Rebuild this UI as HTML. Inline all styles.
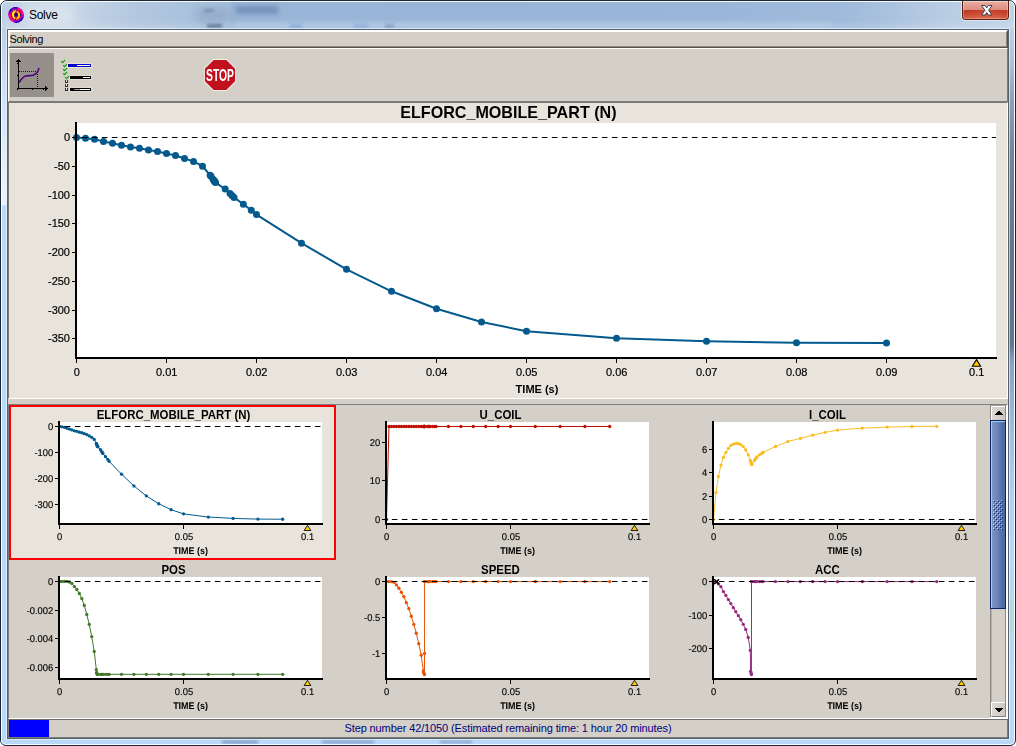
<!DOCTYPE html>
<html lang="en">
<head>
<meta charset="utf-8">
<title>Solve</title>
<style>
html,body{margin:0;padding:0;}
body{width:1016px;height:746px;background:#fff;overflow:hidden;position:relative;
  font-family:"Liberation Sans",Arial,sans-serif;color:#000;}
div{position:absolute;box-sizing:border-box;}
svg{position:absolute;left:0;top:0;overflow:visible;will-change:transform;}
svg text{font-family:"Liberation Sans",Arial,sans-serif;}
#win{left:0;top:0;width:1016px;height:746px;border:1px solid #1b2733;border-radius:7px 7px 6px 6px;overflow:hidden;
  background:#b9d9fb;}
#win:after{content:"";position:absolute;left:0;top:0;right:0;bottom:0;border:1px solid rgba(255,255,255,.9);border-radius:6px 6px 5px 5px;}
#gl-top{left:0;top:0;width:1014px;height:30px;
  background:linear-gradient(to right,#bccfe3 0,#cad8e8 30px,#cbd9e8 70px,#bdcfe3 100px,#b2c7df 140px,#aac2dd 190px,#a4bedb 229px,#99b6d8 232px,#98b5d8 480px,#9ab6d9 720px,#a0bbdb 850px,#b3c8e1 920px,#bccfe5 965px,#c0d2e6 1014px);}
#gl-top2{left:0;top:20px;width:1014px;height:10px;background:linear-gradient(to bottom,rgba(255,255,255,0),rgba(255,255,255,.18));}
#gl-left{left:0;top:28px;width:7px;height:716px;background:linear-gradient(to bottom,#bdd0e6 0,#c2d5ea 17px,#cfe3fa 72px,#e0eefc 130px,#e8f2fc 162px,#e8f2fc 177px,#b9d9fb 178px,#b9d9fb 100%);}
#gl-right{left:1007px;top:28px;width:7px;height:716px;background:linear-gradient(to bottom,#bfd1e5 0,#b0c2d8 32px,#8ea2ba 72px,#72869e 122px,#62768e 222px,#62788f 317px,#86a2c4 334px,#9cbadc 392px,#b0d0f4 472px,#b9d9fb 532px,#b6d9ec 562px,#b4d8dc 592px,#b8d9f4 622px,#b9d9fb 652px,#b9d9fb 100%);}
#inner{left:7px;top:29px;width:1002px;height:710px;border:1px solid #56636f;background:#d4d0c8;box-shadow:0 0 0 1px rgba(240,248,255,.6);}
/* content coordinates: children of #c are in page coordinates */
#c{left:-1px;top:-1px;width:1016px;height:746px;}
#menubar{left:8px;top:30px;width:1000px;height:18px;background:#d4d0c8;border-top:1px solid #fff;border-left:1px solid #fff;border-right:1px solid #55524d;border-bottom:1px solid #55524d;}
#menubar:after{content:"";position:absolute;left:0;top:0;right:0;bottom:0;border-top:1px solid #fff;border-left:1px solid #fff;border-right:1px solid #8d8a84;border-bottom:1px solid #8d8a84;}
#menutxt{left:9.5px;top:32px;font-size:11px;line-height:14px;letter-spacing:-0.35px;white-space:nowrap;}
#toolbar{left:8px;top:48px;width:1000px;height:54px;background:#d4d0c8;border-top:1px solid #fff;border-left:1px solid #fff;border-bottom:1px solid #7c7a76;border-right:1px solid #7c7a76;}
#btnsel{left:10px;top:53px;width:44px;height:44px;background:#959089;}
#upper{left:8px;top:102px;width:1000px;height:297px;background:#e8e4dc;border-top:1px solid #7c7a76;border-left:1px solid #7c7a76;border-right:1px solid #fff;border-bottom:1px solid #fff;}
#lower{left:8px;top:404px;width:1000px;height:315px;background:#d4d0c8;border-top:1px solid #7c8080;border-left:1px solid #7c8080;border-right:1px solid #fff;border-bottom:1px solid #fff;}
#sel{left:9px;top:405px;width:327px;height:155px;background:#e8e4dc;border:2px solid #ff0000;}
#sbwhite{left:990px;top:717px;width:18px;height:1px;background:#fff;}
#sbwhite2{left:1006px;top:405px;width:2px;height:314px;background:#fff;}
#track{left:990px;top:405px;width:16px;height:312px;background:#d4d0c8;border-left:1px solid #8a8986;border-right:1px solid #8a8986;}
#track:after{content:"";position:absolute;left:0;top:0;width:1px;height:100%;background:#b4b1aa;}
#sup{left:991px;top:405px;width:14px;height:15px;background:linear-gradient(to right,#dedad3,#cbc7bf);border-top:1px solid #a4a29c;}
#sup:after{content:"";position:absolute;left:0;top:0;right:0;bottom:0;border-top:1px solid #fff;border-left:1px solid #fff;}
#sdn{left:991px;top:702px;width:14px;height:15px;background:linear-gradient(to right,#dedad3,#cbc7bf);border-top:1px solid #fff;border-left:1px solid #fff;border-bottom:1px solid #807d78;}
#thumb{left:990px;top:420px;width:16px;height:189px;border:1px solid #0a246a;background:linear-gradient(to right,#8199c9 0,#6d87bb 40%,#5272ab 75%,#4a6aa4 100%);}
#thumb:after{content:"";position:absolute;left:0;top:0;right:0;bottom:0;border-top:1px solid #a6caf0;border-left:1px solid #a6caf0;}
#status{left:8px;top:719px;width:1000px;height:19px;background:#d4d0c8;border:1px solid #7f7d78;border-top-color:#6d6c69;}
#prog{left:9px;top:720px;width:40px;height:17px;background:#0000ff;}
#stattxt{left:9px;top:720px;width:998px;height:17px;text-align:center;font-size:11px;line-height:17px;color:#000080;white-space:nowrap;letter-spacing:-0.115px;}
#title{left:29px;top:7px;font-size:12px;line-height:16px;white-space:nowrap;letter-spacing:-0.3px;color:#000;}
#closeglow{left:961px;top:1px;width:49px;height:20px;border-radius:0 0 5px 5px;background:rgba(255,255,255,.5);}
#close{left:962px;top:1px;width:47px;height:19px;border:1px solid #5d1c12;border-top:none;border-radius:0 0 4px 4px;
  background:radial-gradient(ellipse 26px 12px at 50% 100%,rgba(232,120,80,.55),rgba(232,120,80,0)),linear-gradient(to bottom,#f6d2c8 0,#f6d2c8 1px,#e9aa9e 1px,#dc8c7e 9px,#bf3826 9px,#c4412c 13px,#cf5f48 18px);}
#close:after{content:"";position:absolute;left:0;top:1px;right:0;bottom:0;border:1px solid rgba(255,255,255,.28);border-top:none;border-radius:0 0 3px 3px;}
</style>
</head>
<body>
<div id="win">
 <div id="c">
  <div id="gl-top"></div><div id="gl-top2"></div>
  <div id="gl-left"></div><div id="gl-right"></div>
  <div id="blur1" style="left:196px;top:8px;width:34px;height:14px;background:rgba(80,105,140,.2);filter:blur(4px);"></div>
  <div style="left:207px;top:24px;width:15px;height:4px;background:rgba(40,60,90,.5);filter:blur(1.5px);"></div>
  <div style="left:204px;top:9px;width:10px;height:3px;background:rgba(60,80,110,.35);filter:blur(1.5px);"></div>
  <div style="left:290px;top:24px;width:12px;height:4px;background:rgba(60,110,200,.4);filter:blur(1.5px);"></div>
  <div style="left:354px;top:24px;width:14px;height:4px;background:rgba(70,110,190,.35);filter:blur(1.5px);"></div>
  <div style="left:385px;top:24px;width:9px;height:4px;background:rgba(50,60,140,.4);filter:blur(1.5px);"></div>
  <div id="blur2" style="left:236px;top:6px;width:42px;height:8px;background:rgba(70,100,150,.45);filter:blur(2.5px);"></div>
  <div style="left:24px;top:5px;width:50px;height:20px;background:rgba(255,255,255,.28);filter:blur(5px);border-radius:10px;"></div>
  <div style="left:222px;top:740px;width:36px;height:4px;background:rgba(70,100,150,.45);filter:blur(1.5px);"></div>
  <div style="left:322px;top:740px;width:52px;height:4px;background:rgba(70,100,150,.4);filter:blur(1.5px);"></div>
  <div style="left:440px;top:740px;width:32px;height:4px;background:rgba(70,100,150,.35);filter:blur(1.5px);"></div>
  <div id="blur3" style="left:232px;top:22px;width:600px;height:6px;background:rgba(200,220,240,.35);filter:blur(2px);"></div>
 </div>
</div>
<div id="inner"></div>
<div id="menubar"></div>
<div id="menutxt">Solving</div>
<div id="toolbar"></div>
<div id="btnsel"></div>
<div id="upper"></div>
<div id="lower"></div>
<div id="sel"></div>
<div id="sbwhite2"></div>
<div id="track"></div>
<div id="sbwhite"></div>
<div id="sup"></div>
<div id="sdn"></div>
<div id="thumb"></div>
<div id="status"></div>
<div id="prog"></div>
<div id="stattxt">Step number 42/1050 (Estimated remaining time: 1 hour 20 minutes)</div>
<div id="title">Solve</div>
<div id="closeglow"></div><div id="close"></div>
<svg width="1016" height="746" viewBox="0 0 1016 746">
<defs><radialGradient id="ig"><stop offset="0" stop-color="#ff2040"/><stop offset="0.6" stop-color="#ff0058"/><stop offset="1" stop-color="#e4109a"/></radialGradient><clipPath id="icl"><circle cx="16.05" cy="14.9" r="8"/></clipPath></defs>
<g clip-path="url(#icl)">
<circle cx="16.05" cy="14.9" r="8" fill="url(#ig)"/>
<path d="M9.05 14.66 A7.00 7.00 0 0 1 18.44 8.32" fill="none" stroke="#a000e0" stroke-width="2.4" opacity=".9"/>
<path d="M23.05 15.14 A7.00 7.00 0 0 1 13.66 21.48" fill="none" stroke="#a000e0" stroke-width="2.4" opacity=".9"/>
<path d="M9.19 12.40 A7.30 7.30 0 0 1 16.81 7.64" fill="none" stroke="#1600cc" stroke-width="2"/>
<path d="M22.91 17.40 A7.30 7.30 0 0 1 15.29 22.16" fill="none" stroke="#1600cc" stroke-width="2"/>
<circle cx="16.05" cy="14.9" r="4.7" fill="#d8204a"/>
<circle cx="16.05" cy="14.9" r="4.6" fill="none" stroke="#2a08a8" stroke-width="1.3" stroke-dasharray="1.3 1.1"/>
<path d="M15.2 10.3 C11.6 10.8 10.6 16 14.3 18.9 C15.3 19.4 16 18.8 15.2 18 C13.6 16.2 13.5 13.4 15.6 11.4 C16.2 10.7 15.9 10.2 15.2 10.3 Z" fill="#fff000"/>
<path d="M16.9 19.5 C20.5 19 21.5 13.8 17.8 10.9 C16.8 10.4 16.1 11 16.9 11.8 C18.5 13.6 18.6 16.4 16.5 18.4 C15.9 19.1 16.2 19.6 16.9 19.5 Z" fill="#ffc800"/>
<circle cx="16.1" cy="14.9" r="1.8" fill="#12007c"/>
</g>
<g shape-rendering="crispEdges" fill="#000">
<rect x="18" y="59" width="1" height="30"/>
<rect x="17" y="60" width="3" height="1"/><rect x="16" y="61" width="5" height="1"/>
<rect x="17" y="63" width="1" height="1"/><rect x="17" y="75" width="1" height="1"/>
<rect x="17" y="88" width="31" height="1"/>
<rect x="46" y="87" width="1" height="3"/><rect x="45" y="86" width="1" height="5"/>
<rect x="32" y="89" width="1" height="1"/><rect x="43" y="89" width="1" height="1"/><rect x="17" y="89" width="1" height="1"/>
<rect x="19" y="71" width="1" height="1" fill="#1a1a1a"/>
<rect x="21" y="71" width="1" height="1" fill="#1a1a1a"/>
<rect x="23" y="71" width="1" height="1" fill="#1a1a1a"/>
<rect x="25" y="71" width="1" height="1" fill="#1a1a1a"/>
<rect x="27" y="71" width="1" height="1" fill="#1a1a1a"/>
<rect x="29" y="71" width="1" height="1" fill="#1a1a1a"/>
<rect x="31" y="71" width="1" height="1" fill="#1a1a1a"/>
<rect x="33" y="71" width="1" height="1" fill="#1a1a1a"/>
<rect x="35" y="71" width="1" height="1" fill="#1a1a1a"/>
<rect x="37" y="74" width="1" height="1" fill="#1a1a1a"/>
<rect x="37" y="76" width="1" height="1" fill="#1a1a1a"/>
<rect x="37" y="78" width="1" height="1" fill="#1a1a1a"/>
<rect x="37" y="80" width="1" height="1" fill="#1a1a1a"/>
<rect x="37" y="82" width="1" height="1" fill="#1a1a1a"/>
<rect x="37" y="84" width="1" height="1" fill="#1a1a1a"/>
<rect x="37" y="86" width="1" height="1" fill="#1a1a1a"/>
</g>
<path d="M19.2 82.2 C21 79.6 23 76.6 25.5 76 C28 75.2 31 76 33.2 75.2 C35.2 74.4 36.4 73.6 37.2 72.4 C38 71.2 38.4 70 38.7 68.6" fill="none" stroke="#4b0082" stroke-width="1.65" stroke-linecap="round"/>
<path d="M61.5 61.6 L62.5 62.6 L64.7 60.4" fill="none" stroke="#00a000" stroke-width="1.2" stroke-linecap="round" stroke-linejoin="round"/>
<path d="M63.5 65.6 L64.5 66.6 L66.7 64.4" fill="none" stroke="#00a000" stroke-width="1.2" stroke-linecap="round" stroke-linejoin="round"/>
<path d="M63.5 69.6 L64.5 70.6 L66.7 68.4" fill="none" stroke="#00a000" stroke-width="1.2" stroke-linecap="round" stroke-linejoin="round"/>
<path d="M63.5 73.6 L64.5 74.6 L66.7 72.4" fill="none" stroke="#00a000" stroke-width="1.2" stroke-linecap="round" stroke-linejoin="round"/>
<path d="M65.5 77.6 L66.5 78.6 L68.7 76.4" fill="none" stroke="#00a000" stroke-width="1.2" stroke-linecap="round" stroke-linejoin="round"/>
<g shape-rendering="crispEdges">
<rect x="65" y="80" width="3" height="3" fill="#303030"/><rect x="66" y="80" width="1" height="2" fill="#e8e4dc"/>
<rect x="65" y="84" width="3" height="3" fill="#303030"/><rect x="66" y="84" width="1" height="2" fill="#e8e4dc"/>
<rect x="65" y="88" width="3" height="3" fill="#303030"/><rect x="66" y="88" width="1" height="2" fill="#e8e4dc"/>
<rect x="67" y="63" width="25" height="5" fill="#ece8d8" opacity=".8"/>
<rect x="68" y="64" width="23" height="3" fill="#0000c8"/><rect x="77" y="65" width="13" height="1" fill="#fff"/>
<rect x="69" y="75" width="23" height="5" fill="#e4e0d4" opacity=".7"/>
<rect x="70" y="76" width="21" height="3" fill="#000"/><rect x="83" y="77" width="7" height="1" fill="#fff"/>
<rect x="69" y="87" width="23" height="5" fill="#e4e0d4" opacity=".7"/>
<rect x="70" y="88" width="21" height="3" fill="#000"/><rect x="74" y="89" width="6" height="1" fill="#9a9a9a"/><rect x="80" y="89" width="10" height="1" fill="#fff"/>
</g>
<polygon points="236.00,81.63 226.63,91.00 213.37,91.00 204.00,81.63 204.00,68.37 213.37,59.00 226.63,59.00 236.00,68.37" fill="#f4f0ea"/>
<polygon points="235.10,81.25 226.25,90.10 213.75,90.10 204.90,81.25 204.90,68.75 213.75,59.90 226.25,59.90 235.10,68.75" fill="#c1111f"/>
<text x="220" y="80.9" font-size="16.2" font-weight="bold" fill="#fff" text-anchor="middle" textLength="28" lengthAdjust="spacingAndGlyphs">STOP</text>
<path d="M981.5 5.5 L985.1 5.5 L986.75 7.9 L988.4 5.5 L992 5.5 L988.6 10.2 L992 15 L988.4 15 L986.75 12.6 L985.1 15 L981.5 15 L984.9 10.2 Z" fill="#fff" stroke="#3c4254" stroke-width="1" stroke-linejoin="round"/>
<g shape-rendering="crispEdges" fill="#000">
<rect x="998" y="411" width="2" height="1"/>
<rect x="998" y="711" width="2" height="1"/>
<rect x="997" y="412" width="4" height="1"/>
<rect x="997" y="710" width="4" height="1"/>
<rect x="996" y="413" width="6" height="1"/>
<rect x="996" y="709" width="6" height="1"/>
<rect x="995" y="414" width="8" height="1"/>
<rect x="995" y="708" width="8" height="1"/>
</g>
<g shape-rendering="crispEdges">
<rect x="993" y="500" width="1" height="1" fill="#b4d2f4"/><rect x="994" y="501" width="1" height="1" fill="#0a246a"/>
<rect x="997" y="500" width="1" height="1" fill="#b4d2f4"/><rect x="998" y="501" width="1" height="1" fill="#0a246a"/>
<rect x="1001" y="500" width="1" height="1" fill="#b4d2f4"/><rect x="1002" y="501" width="1" height="1" fill="#0a246a"/>
<rect x="995" y="502" width="1" height="1" fill="#b4d2f4"/><rect x="996" y="503" width="1" height="1" fill="#0a246a"/>
<rect x="999" y="502" width="1" height="1" fill="#b4d2f4"/><rect x="1000" y="503" width="1" height="1" fill="#0a246a"/>
<rect x="993" y="504" width="1" height="1" fill="#b4d2f4"/><rect x="994" y="505" width="1" height="1" fill="#0a246a"/>
<rect x="997" y="504" width="1" height="1" fill="#b4d2f4"/><rect x="998" y="505" width="1" height="1" fill="#0a246a"/>
<rect x="1001" y="504" width="1" height="1" fill="#b4d2f4"/><rect x="1002" y="505" width="1" height="1" fill="#0a246a"/>
<rect x="995" y="506" width="1" height="1" fill="#b4d2f4"/><rect x="996" y="507" width="1" height="1" fill="#0a246a"/>
<rect x="999" y="506" width="1" height="1" fill="#b4d2f4"/><rect x="1000" y="507" width="1" height="1" fill="#0a246a"/>
<rect x="993" y="508" width="1" height="1" fill="#b4d2f4"/><rect x="994" y="509" width="1" height="1" fill="#0a246a"/>
<rect x="997" y="508" width="1" height="1" fill="#b4d2f4"/><rect x="998" y="509" width="1" height="1" fill="#0a246a"/>
<rect x="1001" y="508" width="1" height="1" fill="#b4d2f4"/><rect x="1002" y="509" width="1" height="1" fill="#0a246a"/>
<rect x="995" y="510" width="1" height="1" fill="#b4d2f4"/><rect x="996" y="511" width="1" height="1" fill="#0a246a"/>
<rect x="999" y="510" width="1" height="1" fill="#b4d2f4"/><rect x="1000" y="511" width="1" height="1" fill="#0a246a"/>
<rect x="993" y="512" width="1" height="1" fill="#b4d2f4"/><rect x="994" y="513" width="1" height="1" fill="#0a246a"/>
<rect x="997" y="512" width="1" height="1" fill="#b4d2f4"/><rect x="998" y="513" width="1" height="1" fill="#0a246a"/>
<rect x="1001" y="512" width="1" height="1" fill="#b4d2f4"/><rect x="1002" y="513" width="1" height="1" fill="#0a246a"/>
<rect x="995" y="514" width="1" height="1" fill="#b4d2f4"/><rect x="996" y="515" width="1" height="1" fill="#0a246a"/>
<rect x="999" y="514" width="1" height="1" fill="#b4d2f4"/><rect x="1000" y="515" width="1" height="1" fill="#0a246a"/>
<rect x="993" y="516" width="1" height="1" fill="#b4d2f4"/><rect x="994" y="517" width="1" height="1" fill="#0a246a"/>
<rect x="997" y="516" width="1" height="1" fill="#b4d2f4"/><rect x="998" y="517" width="1" height="1" fill="#0a246a"/>
<rect x="1001" y="516" width="1" height="1" fill="#b4d2f4"/><rect x="1002" y="517" width="1" height="1" fill="#0a246a"/>
<rect x="995" y="518" width="1" height="1" fill="#b4d2f4"/><rect x="996" y="519" width="1" height="1" fill="#0a246a"/>
<rect x="999" y="518" width="1" height="1" fill="#b4d2f4"/><rect x="1000" y="519" width="1" height="1" fill="#0a246a"/>
<rect x="993" y="520" width="1" height="1" fill="#b4d2f4"/><rect x="994" y="521" width="1" height="1" fill="#0a246a"/>
<rect x="997" y="520" width="1" height="1" fill="#b4d2f4"/><rect x="998" y="521" width="1" height="1" fill="#0a246a"/>
<rect x="1001" y="520" width="1" height="1" fill="#b4d2f4"/><rect x="1002" y="521" width="1" height="1" fill="#0a246a"/>
<rect x="995" y="522" width="1" height="1" fill="#b4d2f4"/><rect x="996" y="523" width="1" height="1" fill="#0a246a"/>
<rect x="999" y="522" width="1" height="1" fill="#b4d2f4"/><rect x="1000" y="523" width="1" height="1" fill="#0a246a"/>
<rect x="993" y="524" width="1" height="1" fill="#b4d2f4"/><rect x="994" y="525" width="1" height="1" fill="#0a246a"/>
<rect x="997" y="524" width="1" height="1" fill="#b4d2f4"/><rect x="998" y="525" width="1" height="1" fill="#0a246a"/>
<rect x="1001" y="524" width="1" height="1" fill="#b4d2f4"/><rect x="1002" y="525" width="1" height="1" fill="#0a246a"/>
<rect x="995" y="526" width="1" height="1" fill="#b4d2f4"/><rect x="996" y="527" width="1" height="1" fill="#0a246a"/>
<rect x="999" y="526" width="1" height="1" fill="#b4d2f4"/><rect x="1000" y="527" width="1" height="1" fill="#0a246a"/>
<rect x="993" y="528" width="1" height="1" fill="#b4d2f4"/><rect x="994" y="529" width="1" height="1" fill="#0a246a"/>
<rect x="997" y="528" width="1" height="1" fill="#b4d2f4"/><rect x="998" y="529" width="1" height="1" fill="#0a246a"/>
<rect x="1001" y="528" width="1" height="1" fill="#b4d2f4"/><rect x="1002" y="529" width="1" height="1" fill="#0a246a"/>
</g>
<rect x="77" y="123" width="919" height="234" fill="#fff"/>
<polyline fill="none" stroke="#045a8d" stroke-width="2" stroke-linejoin="round" points="76.5,137.5 85.5,138.2 94.5,139.3 103.5,141.4 112.5,143.2 121.5,145.2 130.5,147.1 139.5,148.3 148.5,150.1 157.5,151.4 166.5,153.4 175.5,155.5 184.5,158.5 193.5,161.4 202.5,166.2 210.15,175.24 211.05,176.33 213.03,179.3 214.2,180.83 214.47,181.19 214.74,181.54 215.55,182.6 225.18,189 230.04,193.5 232.02,195.5 234,197.4 243.36,204.3 251.28,210.3 256.5,214.6 301.5,243.2 346.5,269.3 391.5,291.3 436.5,308.8 481.5,322 526.5,331.2 616.5,338.3 706.5,341.3 796.5,342.8 886.5,343.1"/>
<g fill="#045a8d"><circle cx="76.5" cy="137.5" r="3.5"/><circle cx="85.5" cy="138.2" r="3.5"/><circle cx="94.5" cy="139.3" r="3.5"/><circle cx="103.5" cy="141.4" r="3.5"/><circle cx="112.5" cy="143.2" r="3.5"/><circle cx="121.5" cy="145.2" r="3.5"/><circle cx="130.5" cy="147.1" r="3.5"/><circle cx="139.5" cy="148.3" r="3.5"/><circle cx="148.5" cy="150.1" r="3.5"/><circle cx="157.5" cy="151.4" r="3.5"/><circle cx="166.5" cy="153.4" r="3.5"/><circle cx="175.5" cy="155.5" r="3.5"/><circle cx="184.5" cy="158.5" r="3.5"/><circle cx="193.5" cy="161.4" r="3.5"/><circle cx="202.5" cy="166.2" r="3.5"/><circle cx="210.15" cy="175.24" r="3.5"/><circle cx="211.05" cy="176.33" r="3.5"/><circle cx="213.03" cy="179.3" r="3.5"/><circle cx="214.2" cy="180.83" r="3.5"/><circle cx="214.47" cy="181.19" r="3.5"/><circle cx="214.74" cy="181.54" r="3.5"/><circle cx="215.55" cy="182.6" r="3.5"/><circle cx="225.18" cy="189" r="3.5"/><circle cx="230.04" cy="193.5" r="3.5"/><circle cx="232.02" cy="195.5" r="3.5"/><circle cx="234" cy="197.4" r="3.5"/><circle cx="243.36" cy="204.3" r="3.5"/><circle cx="251.28" cy="210.3" r="3.5"/><circle cx="256.5" cy="214.6" r="3.5"/><circle cx="301.5" cy="243.2" r="3.5"/><circle cx="346.5" cy="269.3" r="3.5"/><circle cx="391.5" cy="291.3" r="3.5"/><circle cx="436.5" cy="308.8" r="3.5"/><circle cx="481.5" cy="322" r="3.5"/><circle cx="526.5" cy="331.2" r="3.5"/><circle cx="616.5" cy="338.3" r="3.5"/><circle cx="706.5" cy="341.3" r="3.5"/><circle cx="796.5" cy="342.8" r="3.5"/><circle cx="886.5" cy="343.1" r="3.5"/></g>
<line x1="77" y1="137.5" x2="996" y2="137.5" stroke="#000" stroke-width="1" stroke-dasharray="5.6 4.4" stroke-dashoffset="5.15"/>
<g fill="#000" shape-rendering="crispEdges">
<rect x="75" y="122" width="2" height="237"/><rect x="75" y="357" width="922" height="2"/>
<rect x="72" y="137" width="3" height="1"/>
<rect x="72" y="166" width="3" height="1"/>
<rect x="72" y="195" width="3" height="1"/>
<rect x="72" y="223" width="3" height="1"/>
<rect x="72" y="252" width="3" height="1"/>
<rect x="72" y="281" width="3" height="1"/>
<rect x="72" y="310" width="3" height="1"/>
<rect x="72" y="338" width="3" height="1"/>
<rect x="76" y="359" width="1" height="4"/>
<rect x="166" y="359" width="1" height="4"/>
<rect x="256" y="359" width="1" height="4"/>
<rect x="346" y="359" width="1" height="4"/>
<rect x="436" y="359" width="1" height="4"/>
<rect x="526" y="359" width="1" height="4"/>
<rect x="616" y="359" width="1" height="4"/>
<rect x="706" y="359" width="1" height="4"/>
<rect x="796" y="359" width="1" height="4"/>
<rect x="886" y="359" width="1" height="4"/>
</g>
<g font-size="11" fill="#000" text-anchor="end" stroke="#000" stroke-width=".2">
<text x="70" y="141">0</text>
<text x="70" y="170">-50</text>
<text x="70" y="199">-100</text>
<text x="70" y="227">-150</text>
<text x="70" y="256">-200</text>
<text x="70" y="285">-250</text>
<text x="70" y="314">-300</text>
<text x="70" y="342">-350</text>
</g><g font-size="11" fill="#000" text-anchor="middle" stroke="#000" stroke-width=".2">
<text x="76.7" y="376">0</text>
<text x="166.7" y="376">0.01</text>
<text x="256.7" y="376">0.02</text>
<text x="346.7" y="376">0.03</text>
<text x="436.7" y="376">0.04</text>
<text x="526.7" y="376">0.05</text>
<text x="616.7" y="376">0.06</text>
<text x="706.7" y="376">0.07</text>
<text x="796.7" y="376">0.08</text>
<text x="886.7" y="376">0.09</text>
<text x="976.7" y="376">0.1</text>
</g>
<path d="M976.5 359.6 L980.6 366.2 L972.4 366.2 Z" fill="#ffcc00" stroke="#000" stroke-width="1.1" stroke-linejoin="miter"/>
<text x="537" y="392.8" font-size="11" font-weight="bold" text-anchor="middle">TIME (s)</text>
<text x="508.4" y="118.2" font-size="16.6" font-weight="bold" text-anchor="middle" textLength="216.4" lengthAdjust="spacingAndGlyphs">ELFORC_MOBILE_PART (N)</text>
<g transform="translate(9,405)">
<rect x="51" y="17" width="262" height="101" fill="#fff"/>
<polyline fill="none" stroke="#045a8d" stroke-width="1" stroke-linejoin="round" points="50.5,21.5 52.98,21.82 55.46,22.31 57.94,23.26 60.42,24.07 62.9,24.97 65.38,25.83 67.86,26.37 70.34,27.18 72.82,27.77 75.3,28.67 77.78,29.62 80.26,30.97 82.74,32.28 85.22,34.44 87.33,38.52 87.58,39.01 88.12,40.35 88.44,41.04 88.52,41.2 88.59,41.36 88.82,41.84 91.47,44.73 92.81,46.76 93.35,47.66 93.9,48.51 96.48,51.63 98.66,54.33 100.1,56.27 112.5,69.17 124.9,80.94 137.3,90.86 149.7,98.76 162.1,104.71 174.5,108.86 199.3,112.06 224.1,113.41 248.9,114.09 273.7,114.23"/>
<g fill="#045a8d"><circle cx="50.5" cy="21.5" r="1.65"/><circle cx="52.98" cy="21.82" r="1.65"/><circle cx="55.46" cy="22.31" r="1.65"/><circle cx="57.94" cy="23.26" r="1.65"/><circle cx="60.42" cy="24.07" r="1.65"/><circle cx="62.9" cy="24.97" r="1.65"/><circle cx="65.38" cy="25.83" r="1.65"/><circle cx="67.86" cy="26.37" r="1.65"/><circle cx="70.34" cy="27.18" r="1.65"/><circle cx="72.82" cy="27.77" r="1.65"/><circle cx="75.3" cy="28.67" r="1.65"/><circle cx="77.78" cy="29.62" r="1.65"/><circle cx="80.26" cy="30.97" r="1.65"/><circle cx="82.74" cy="32.28" r="1.65"/><circle cx="85.22" cy="34.44" r="1.65"/><circle cx="87.33" cy="38.52" r="1.65"/><circle cx="87.58" cy="39.01" r="1.65"/><circle cx="88.12" cy="40.35" r="1.65"/><circle cx="88.44" cy="41.04" r="1.65"/><circle cx="88.52" cy="41.2" r="1.65"/><circle cx="88.59" cy="41.36" r="1.65"/><circle cx="88.82" cy="41.84" r="1.65"/><circle cx="91.47" cy="44.73" r="1.65"/><circle cx="92.81" cy="46.76" r="1.65"/><circle cx="93.35" cy="47.66" r="1.65"/><circle cx="93.9" cy="48.51" r="1.65"/><circle cx="96.48" cy="51.63" r="1.65"/><circle cx="98.66" cy="54.33" r="1.65"/><circle cx="100.1" cy="56.27" r="1.65"/><circle cx="112.5" cy="69.17" r="1.65"/><circle cx="124.9" cy="80.94" r="1.65"/><circle cx="137.3" cy="90.86" r="1.65"/><circle cx="149.7" cy="98.76" r="1.65"/><circle cx="162.1" cy="104.71" r="1.65"/><circle cx="174.5" cy="108.86" r="1.65"/><circle cx="199.3" cy="112.06" r="1.65"/><circle cx="224.1" cy="113.41" r="1.65"/><circle cx="248.9" cy="114.09" r="1.65"/><circle cx="273.7" cy="114.23" r="1.65"/></g>
<line x1="51" y1="21.5" x2="313" y2="21.5" stroke="#000" stroke-width="1" stroke-dasharray="5.6 4.4" stroke-dashoffset="5.15"/>
<g fill="#000" shape-rendering="crispEdges">
<rect x="49" y="16" width="2" height="104"/><rect x="49" y="118" width="265" height="2"/>
<rect x="46" y="21" width="3" height="1"/>
<rect x="46" y="47" width="3" height="1"/>
<rect x="46" y="73" width="3" height="1"/>
<rect x="46" y="99" width="3" height="1"/>
<rect x="50" y="120" width="1" height="4"/><rect x="174" y="120" width="1" height="4"/>
</g>
<g font-size="9.8" fill="#000" text-anchor="end" stroke="#000" stroke-width=".15" text-rendering="geometricPrecision">
<text x="44.3" y="24.85" textLength="5.23" lengthAdjust="spacingAndGlyphs">0</text>
<text x="44.3" y="50.85" textLength="18.81" lengthAdjust="spacingAndGlyphs">-100</text>
<text x="44.3" y="76.85" textLength="18.81" lengthAdjust="spacingAndGlyphs">-200</text>
<text x="44.3" y="102.85" textLength="18.81" lengthAdjust="spacingAndGlyphs">-300</text>
</g><g font-size="9.8" fill="#000" text-anchor="middle" stroke="#000" stroke-width=".15" text-rendering="geometricPrecision">
<text x="50.6" y="134.6" textLength="5.23" lengthAdjust="spacingAndGlyphs">0</text><text x="175" y="134.6" textLength="18.3" lengthAdjust="spacingAndGlyphs">0.05</text><text x="298.6" y="134.6" textLength="13.07" lengthAdjust="spacingAndGlyphs">0.1</text></g>
<path d="M298.5 120.3 L301.9 125.5 L295.1 125.5 Z" fill="#ffcc00" stroke="#000" stroke-width=".85" stroke-linejoin="miter"/>
<text x="181.6" y="148.7" font-size="9.7" font-weight="bold" text-anchor="middle" textLength="34.9" lengthAdjust="spacingAndGlyphs" text-rendering="geometricPrecision">TIME (s)</text>
<text x="164.5" y="14.1" font-size="12.4" font-weight="bold" text-anchor="middle" textLength="153.54" lengthAdjust="spacingAndGlyphs">ELFORC_MOBILE_PART (N)</text>
</g>
<g transform="translate(336,405)">
<rect x="51" y="17" width="262" height="101" fill="#fff"/>
<polyline fill="none" stroke="#bd1000" stroke-width="1" stroke-linejoin="round" points="50.5,114.5 52.98,21.5 55.46,21.5 57.94,21.5 60.42,21.5 62.9,21.5 65.38,21.5 67.86,21.5 70.34,21.5 72.82,21.5 75.3,21.5 77.78,21.5 80.26,21.5 82.74,21.5 85.22,21.5 87.33,21.5 87.58,21.5 88.12,21.5 88.44,21.5 88.52,21.5 88.59,21.5 88.82,21.5 91.47,21.5 92.81,21.5 93.35,21.5 93.9,21.5 96.48,21.5 98.66,21.5 100.1,21.5 112.5,21.5 124.9,21.5 137.3,21.5 149.7,21.5 162.1,21.5 174.5,21.5 199.3,21.5 224.1,21.5 248.9,21.5 273.7,21.5"/>
<g fill="#bd1000"><circle cx="50.5" cy="114.5" r="1.65"/><circle cx="52.98" cy="21.5" r="1.65"/><circle cx="55.46" cy="21.5" r="1.65"/><circle cx="57.94" cy="21.5" r="1.65"/><circle cx="60.42" cy="21.5" r="1.65"/><circle cx="62.9" cy="21.5" r="1.65"/><circle cx="65.38" cy="21.5" r="1.65"/><circle cx="67.86" cy="21.5" r="1.65"/><circle cx="70.34" cy="21.5" r="1.65"/><circle cx="72.82" cy="21.5" r="1.65"/><circle cx="75.3" cy="21.5" r="1.65"/><circle cx="77.78" cy="21.5" r="1.65"/><circle cx="80.26" cy="21.5" r="1.65"/><circle cx="82.74" cy="21.5" r="1.65"/><circle cx="85.22" cy="21.5" r="1.65"/><circle cx="87.33" cy="21.5" r="1.65"/><circle cx="87.58" cy="21.5" r="1.65"/><circle cx="88.12" cy="21.5" r="1.65"/><circle cx="88.44" cy="21.5" r="1.65"/><circle cx="88.52" cy="21.5" r="1.65"/><circle cx="88.59" cy="21.5" r="1.65"/><circle cx="88.82" cy="21.5" r="1.65"/><circle cx="91.47" cy="21.5" r="1.65"/><circle cx="92.81" cy="21.5" r="1.65"/><circle cx="93.35" cy="21.5" r="1.65"/><circle cx="93.9" cy="21.5" r="1.65"/><circle cx="96.48" cy="21.5" r="1.65"/><circle cx="98.66" cy="21.5" r="1.65"/><circle cx="100.1" cy="21.5" r="1.65"/><circle cx="112.5" cy="21.5" r="1.65"/><circle cx="124.9" cy="21.5" r="1.65"/><circle cx="137.3" cy="21.5" r="1.65"/><circle cx="149.7" cy="21.5" r="1.65"/><circle cx="162.1" cy="21.5" r="1.65"/><circle cx="174.5" cy="21.5" r="1.65"/><circle cx="199.3" cy="21.5" r="1.65"/><circle cx="224.1" cy="21.5" r="1.65"/><circle cx="248.9" cy="21.5" r="1.65"/><circle cx="273.7" cy="21.5" r="1.65"/></g>
<line x1="51" y1="114.5" x2="313" y2="114.5" stroke="#000" stroke-width="1" stroke-dasharray="5.6 4.4" stroke-dashoffset="5.15"/>
<g fill="#000" shape-rendering="crispEdges">
<rect x="49" y="16" width="2" height="104"/><rect x="49" y="118" width="265" height="2"/>
<rect x="46" y="37" width="3" height="1"/>
<rect x="46" y="75" width="3" height="1"/>
<rect x="46" y="114" width="3" height="1"/>
<rect x="50" y="120" width="1" height="4"/><rect x="174" y="120" width="1" height="4"/>
</g>
<g font-size="9.8" fill="#000" text-anchor="end" stroke="#000" stroke-width=".15" text-rendering="geometricPrecision">
<text x="44.3" y="40.85" textLength="10.46" lengthAdjust="spacingAndGlyphs">20</text>
<text x="44.3" y="78.85" textLength="10.46" lengthAdjust="spacingAndGlyphs">10</text>
<text x="44.3" y="117.85" textLength="5.23" lengthAdjust="spacingAndGlyphs">0</text>
</g><g font-size="9.8" fill="#000" text-anchor="middle" stroke="#000" stroke-width=".15" text-rendering="geometricPrecision">
<text x="50.6" y="134.6" textLength="5.23" lengthAdjust="spacingAndGlyphs">0</text><text x="175" y="134.6" textLength="18.3" lengthAdjust="spacingAndGlyphs">0.05</text><text x="298.6" y="134.6" textLength="13.07" lengthAdjust="spacingAndGlyphs">0.1</text></g>
<path d="M298.5 120.3 L301.9 125.5 L295.1 125.5 Z" fill="#ffcc00" stroke="#000" stroke-width=".85" stroke-linejoin="miter"/>
<text x="181.6" y="148.7" font-size="9.7" font-weight="bold" text-anchor="middle" textLength="34.9" lengthAdjust="spacingAndGlyphs" text-rendering="geometricPrecision">TIME (s)</text>
<text x="164.5" y="14.1" font-size="12.4" font-weight="bold" text-anchor="middle" textLength="41.93" lengthAdjust="spacingAndGlyphs">U_COIL</text>
</g>
<g transform="translate(663,405)">
<rect x="51" y="17" width="262" height="101" fill="#fff"/>
<polyline fill="none" stroke="#f9be25" stroke-width="1" stroke-linejoin="round" points="50.5,114.6 52.98,87.6 55.46,71.4 57.94,60.1 60.42,52.4 62.9,47.3 65.38,43.3 67.86,40.4 70.34,39.1 72.82,38.4 75.3,38.5 77.78,39.6 80.26,41.6 82.74,45 85.22,49.8 87.33,55.41 87.58,56.09 88.12,58 88.44,58.74 88.52,58.91 88.59,59.09 88.82,59.6 91.47,55.5 92.81,53.5 93.35,52.8 93.9,52 96.48,49.8 98.66,48.4 100.1,47.5 112.5,41.5 124.9,36.5 137.3,33.4 149.7,30.2 162.1,27.4 174.5,25.1 199.3,23.1 224.1,22.1 248.9,21.5 273.7,21.3"/>
<g fill="#f9be25"><circle cx="50.5" cy="114.6" r="1.65"/><circle cx="52.98" cy="87.6" r="1.65"/><circle cx="55.46" cy="71.4" r="1.65"/><circle cx="57.94" cy="60.1" r="1.65"/><circle cx="60.42" cy="52.4" r="1.65"/><circle cx="62.9" cy="47.3" r="1.65"/><circle cx="65.38" cy="43.3" r="1.65"/><circle cx="67.86" cy="40.4" r="1.65"/><circle cx="70.34" cy="39.1" r="1.65"/><circle cx="72.82" cy="38.4" r="1.65"/><circle cx="75.3" cy="38.5" r="1.65"/><circle cx="77.78" cy="39.6" r="1.65"/><circle cx="80.26" cy="41.6" r="1.65"/><circle cx="82.74" cy="45" r="1.65"/><circle cx="85.22" cy="49.8" r="1.65"/><circle cx="87.33" cy="55.41" r="1.65"/><circle cx="87.58" cy="56.09" r="1.65"/><circle cx="88.12" cy="58" r="1.65"/><circle cx="88.44" cy="58.74" r="1.65"/><circle cx="88.52" cy="58.91" r="1.65"/><circle cx="88.59" cy="59.09" r="1.65"/><circle cx="88.82" cy="59.6" r="1.65"/><circle cx="91.47" cy="55.5" r="1.65"/><circle cx="92.81" cy="53.5" r="1.65"/><circle cx="93.35" cy="52.8" r="1.65"/><circle cx="93.9" cy="52" r="1.65"/><circle cx="96.48" cy="49.8" r="1.65"/><circle cx="98.66" cy="48.4" r="1.65"/><circle cx="100.1" cy="47.5" r="1.65"/><circle cx="112.5" cy="41.5" r="1.65"/><circle cx="124.9" cy="36.5" r="1.65"/><circle cx="137.3" cy="33.4" r="1.65"/><circle cx="149.7" cy="30.2" r="1.65"/><circle cx="162.1" cy="27.4" r="1.65"/><circle cx="174.5" cy="25.1" r="1.65"/><circle cx="199.3" cy="23.1" r="1.65"/><circle cx="224.1" cy="22.1" r="1.65"/><circle cx="248.9" cy="21.5" r="1.65"/><circle cx="273.7" cy="21.3" r="1.65"/></g>
<line x1="51" y1="114.5" x2="313" y2="114.5" stroke="#000" stroke-width="1" stroke-dasharray="5.6 4.4" stroke-dashoffset="5.15"/>
<g fill="#000" shape-rendering="crispEdges">
<rect x="49" y="16" width="2" height="104"/><rect x="49" y="118" width="265" height="2"/>
<rect x="46" y="44" width="3" height="1"/>
<rect x="46" y="67" width="3" height="1"/>
<rect x="46" y="91" width="3" height="1"/>
<rect x="46" y="114" width="3" height="1"/>
<rect x="50" y="120" width="1" height="4"/><rect x="174" y="120" width="1" height="4"/>
</g>
<g font-size="9.8" fill="#000" text-anchor="end" stroke="#000" stroke-width=".15" text-rendering="geometricPrecision">
<text x="44.3" y="47.85" textLength="5.23" lengthAdjust="spacingAndGlyphs">6</text>
<text x="44.3" y="70.85" textLength="5.23" lengthAdjust="spacingAndGlyphs">4</text>
<text x="44.3" y="94.85" textLength="5.23" lengthAdjust="spacingAndGlyphs">2</text>
<text x="44.3" y="117.85" textLength="5.23" lengthAdjust="spacingAndGlyphs">0</text>
</g><g font-size="9.8" fill="#000" text-anchor="middle" stroke="#000" stroke-width=".15" text-rendering="geometricPrecision">
<text x="50.6" y="134.6" textLength="5.23" lengthAdjust="spacingAndGlyphs">0</text><text x="175" y="134.6" textLength="18.3" lengthAdjust="spacingAndGlyphs">0.05</text><text x="298.6" y="134.6" textLength="13.07" lengthAdjust="spacingAndGlyphs">0.1</text></g>
<path d="M298.5 120.3 L301.9 125.5 L295.1 125.5 Z" fill="#ffcc00" stroke="#000" stroke-width=".85" stroke-linejoin="miter"/>
<text x="181.6" y="148.7" font-size="9.7" font-weight="bold" text-anchor="middle" textLength="34.9" lengthAdjust="spacingAndGlyphs" text-rendering="geometricPrecision">TIME (s)</text>
<text x="164.5" y="14.1" font-size="12.4" font-weight="bold" text-anchor="middle" textLength="36.84" lengthAdjust="spacingAndGlyphs">I_COIL</text>
</g>
<g transform="translate(9,560)">
<rect x="51" y="17" width="262" height="101" fill="#fff"/>
<polyline fill="none" stroke="#41782a" stroke-width="1" stroke-linejoin="round" points="50.5,21.4 52.98,21.4 55.46,21.4 57.94,21.4 60.42,22 62.9,23.4 65.38,26.6 67.86,29.5 70.34,33.5 72.82,38.6 75.3,45.4 77.78,54.5 80.26,64.4 82.74,76.6 85.22,91.5 87.33,109.6 87.58,112.5 88.12,113.8 88.44,114.3 88.52,114.3 88.59,114.3 88.82,114.3 91.47,114.3 92.81,114.3 93.35,114.3 93.9,114.3 96.48,114.3 98.66,114.3 100.1,114.3 112.5,114.3 124.9,114.3 137.3,114.3 149.7,114.3 162.1,114.3 174.5,114.3 199.3,114.3 224.1,114.3 248.9,114.3 273.7,114.3"/>
<g fill="#41782a"><circle cx="50.5" cy="21.4" r="1.65"/><circle cx="52.98" cy="21.4" r="1.65"/><circle cx="55.46" cy="21.4" r="1.65"/><circle cx="57.94" cy="21.4" r="1.65"/><circle cx="60.42" cy="22" r="1.65"/><circle cx="62.9" cy="23.4" r="1.65"/><circle cx="65.38" cy="26.6" r="1.65"/><circle cx="67.86" cy="29.5" r="1.65"/><circle cx="70.34" cy="33.5" r="1.65"/><circle cx="72.82" cy="38.6" r="1.65"/><circle cx="75.3" cy="45.4" r="1.65"/><circle cx="77.78" cy="54.5" r="1.65"/><circle cx="80.26" cy="64.4" r="1.65"/><circle cx="82.74" cy="76.6" r="1.65"/><circle cx="85.22" cy="91.5" r="1.65"/><circle cx="87.33" cy="109.6" r="1.65"/><circle cx="87.58" cy="112.5" r="1.65"/><circle cx="88.12" cy="113.8" r="1.65"/><circle cx="88.44" cy="114.3" r="1.65"/><circle cx="88.52" cy="114.3" r="1.65"/><circle cx="88.59" cy="114.3" r="1.65"/><circle cx="88.82" cy="114.3" r="1.65"/><circle cx="91.47" cy="114.3" r="1.65"/><circle cx="92.81" cy="114.3" r="1.65"/><circle cx="93.35" cy="114.3" r="1.65"/><circle cx="93.9" cy="114.3" r="1.65"/><circle cx="96.48" cy="114.3" r="1.65"/><circle cx="98.66" cy="114.3" r="1.65"/><circle cx="100.1" cy="114.3" r="1.65"/><circle cx="112.5" cy="114.3" r="1.65"/><circle cx="124.9" cy="114.3" r="1.65"/><circle cx="137.3" cy="114.3" r="1.65"/><circle cx="149.7" cy="114.3" r="1.65"/><circle cx="162.1" cy="114.3" r="1.65"/><circle cx="174.5" cy="114.3" r="1.65"/><circle cx="199.3" cy="114.3" r="1.65"/><circle cx="224.1" cy="114.3" r="1.65"/><circle cx="248.9" cy="114.3" r="1.65"/><circle cx="273.7" cy="114.3" r="1.65"/></g>
<line x1="51" y1="21.5" x2="313" y2="21.5" stroke="#000" stroke-width="1" stroke-dasharray="5.6 4.4" stroke-dashoffset="5.15"/>
<g fill="#000" shape-rendering="crispEdges">
<rect x="49" y="16" width="2" height="104"/><rect x="49" y="118" width="265" height="2"/>
<rect x="46" y="21" width="3" height="1"/>
<rect x="46" y="50" width="3" height="1"/>
<rect x="46" y="78" width="3" height="1"/>
<rect x="46" y="107" width="3" height="1"/>
<rect x="50" y="120" width="1" height="4"/><rect x="174" y="120" width="1" height="4"/>
</g>
<g font-size="9.8" fill="#000" text-anchor="end" stroke="#000" stroke-width=".15" text-rendering="geometricPrecision">
<text x="44.3" y="24.85" textLength="5.23" lengthAdjust="spacingAndGlyphs">0</text>
<text x="44.3" y="53.85" textLength="26.66" lengthAdjust="spacingAndGlyphs">-0.002</text>
<text x="44.3" y="81.85" textLength="26.66" lengthAdjust="spacingAndGlyphs">-0.004</text>
<text x="44.3" y="110.85" textLength="26.66" lengthAdjust="spacingAndGlyphs">-0.006</text>
</g><g font-size="9.8" fill="#000" text-anchor="middle" stroke="#000" stroke-width=".15" text-rendering="geometricPrecision">
<text x="50.6" y="134.6" textLength="5.23" lengthAdjust="spacingAndGlyphs">0</text><text x="175" y="134.6" textLength="18.3" lengthAdjust="spacingAndGlyphs">0.05</text><text x="298.6" y="134.6" textLength="13.07" lengthAdjust="spacingAndGlyphs">0.1</text></g>
<path d="M298.5 120.3 L301.9 125.5 L295.1 125.5 Z" fill="#ffcc00" stroke="#000" stroke-width=".85" stroke-linejoin="miter"/>
<text x="181.6" y="148.7" font-size="9.7" font-weight="bold" text-anchor="middle" textLength="34.9" lengthAdjust="spacingAndGlyphs" text-rendering="geometricPrecision">TIME (s)</text>
<text x="164.5" y="14.1" font-size="12.4" font-weight="bold" text-anchor="middle" textLength="24.14" lengthAdjust="spacingAndGlyphs">POS</text>
</g>
<g transform="translate(336,560)">
<rect x="51" y="17" width="262" height="101" fill="#fff"/>
<polyline fill="none" stroke="#e65305" stroke-width="1" stroke-linejoin="round" points="50.5,21.57 52.98,21.57 55.46,21.72 57.94,22.34 60.42,24.96 62.9,28.2 65.38,32.36 67.86,36.53 70.34,42.7 72.82,48.56 75.3,56.27 77.78,64.29 80.26,73.23 82.74,83.72 85.22,95.13 87.33,110.9 87.58,112.4 88.12,113.8 88.44,114.5 88.52,93.4 88.59,21.57 88.82,21.57 91.47,21.57 92.81,21.57 93.35,21.57 93.9,21.57 96.48,21.57 98.66,21.57 100.1,21.57 112.5,21.57 124.9,21.57 137.3,21.57 149.7,21.57 162.1,21.57 174.5,21.57 199.3,21.57 224.1,21.57 248.9,21.57 273.7,21.57"/>
<g fill="#e65305"><circle cx="50.5" cy="21.57" r="1.65"/><circle cx="52.98" cy="21.57" r="1.65"/><circle cx="55.46" cy="21.72" r="1.65"/><circle cx="57.94" cy="22.34" r="1.65"/><circle cx="60.42" cy="24.96" r="1.65"/><circle cx="62.9" cy="28.2" r="1.65"/><circle cx="65.38" cy="32.36" r="1.65"/><circle cx="67.86" cy="36.53" r="1.65"/><circle cx="70.34" cy="42.7" r="1.65"/><circle cx="72.82" cy="48.56" r="1.65"/><circle cx="75.3" cy="56.27" r="1.65"/><circle cx="77.78" cy="64.29" r="1.65"/><circle cx="80.26" cy="73.23" r="1.65"/><circle cx="82.74" cy="83.72" r="1.65"/><circle cx="85.22" cy="95.13" r="1.65"/><circle cx="87.33" cy="110.9" r="1.65"/><circle cx="87.58" cy="112.4" r="1.65"/><circle cx="88.12" cy="113.8" r="1.65"/><circle cx="88.44" cy="114.5" r="1.65"/><circle cx="88.52" cy="93.4" r="1.65"/><circle cx="88.59" cy="21.57" r="1.65"/><circle cx="88.82" cy="21.57" r="1.65"/><circle cx="91.47" cy="21.57" r="1.65"/><circle cx="92.81" cy="21.57" r="1.65"/><circle cx="93.35" cy="21.57" r="1.65"/><circle cx="93.9" cy="21.57" r="1.65"/><circle cx="96.48" cy="21.57" r="1.65"/><circle cx="98.66" cy="21.57" r="1.65"/><circle cx="100.1" cy="21.57" r="1.65"/><circle cx="112.5" cy="21.57" r="1.65"/><circle cx="124.9" cy="21.57" r="1.65"/><circle cx="137.3" cy="21.57" r="1.65"/><circle cx="149.7" cy="21.57" r="1.65"/><circle cx="162.1" cy="21.57" r="1.65"/><circle cx="174.5" cy="21.57" r="1.65"/><circle cx="199.3" cy="21.57" r="1.65"/><circle cx="224.1" cy="21.57" r="1.65"/><circle cx="248.9" cy="21.57" r="1.65"/><circle cx="273.7" cy="21.57" r="1.65"/></g>
<line x1="51" y1="21.5" x2="313" y2="21.5" stroke="#000" stroke-width="1" stroke-dasharray="5.6 4.4" stroke-dashoffset="5.15"/>
<g fill="#000" shape-rendering="crispEdges">
<rect x="49" y="16" width="2" height="104"/><rect x="49" y="118" width="265" height="2"/>
<rect x="46" y="21" width="3" height="1"/>
<rect x="46" y="57" width="3" height="1"/>
<rect x="46" y="93" width="3" height="1"/>
<rect x="50" y="120" width="1" height="4"/><rect x="174" y="120" width="1" height="4"/>
</g>
<g font-size="9.8" fill="#000" text-anchor="end" stroke="#000" stroke-width=".15" text-rendering="geometricPrecision">
<text x="44.3" y="24.85" textLength="5.23" lengthAdjust="spacingAndGlyphs">0</text>
<text x="44.3" y="60.85" textLength="16.2" lengthAdjust="spacingAndGlyphs">-0.5</text>
<text x="44.3" y="96.85" textLength="8.36" lengthAdjust="spacingAndGlyphs">-1</text>
</g><g font-size="9.8" fill="#000" text-anchor="middle" stroke="#000" stroke-width=".15" text-rendering="geometricPrecision">
<text x="50.6" y="134.6" textLength="5.23" lengthAdjust="spacingAndGlyphs">0</text><text x="175" y="134.6" textLength="18.3" lengthAdjust="spacingAndGlyphs">0.05</text><text x="298.6" y="134.6" textLength="13.07" lengthAdjust="spacingAndGlyphs">0.1</text></g>
<path d="M298.5 120.3 L301.9 125.5 L295.1 125.5 Z" fill="#ffcc00" stroke="#000" stroke-width=".85" stroke-linejoin="miter"/>
<text x="181.6" y="148.7" font-size="9.7" font-weight="bold" text-anchor="middle" textLength="34.9" lengthAdjust="spacingAndGlyphs" text-rendering="geometricPrecision">TIME (s)</text>
<text x="164.5" y="14.1" font-size="12.4" font-weight="bold" text-anchor="middle" textLength="38.76" lengthAdjust="spacingAndGlyphs">SPEED</text>
</g>
<g transform="translate(663,560)">
<rect x="51" y="17" width="262" height="101" fill="#fff"/>
<polyline fill="none" stroke="#972c7f" stroke-width="1" stroke-linejoin="round" points="50.5,21.57 52.98,21.88 55.46,23.88 57.94,26.66 60.42,31.59 62.9,35.45 65.38,39.61 67.86,43.62 70.34,47.63 72.82,51.64 75.3,55.65 77.78,59.66 80.26,64.29 82.74,69.38 85.22,77.4 87.33,90.4 87.58,111.3 88.12,113 88.44,114.5 88.52,21.57 88.59,21.57 88.82,21.57 91.47,21.57 92.81,21.57 93.35,21.57 93.9,21.57 96.48,21.57 98.66,21.57 100.1,21.57 112.5,21.57 124.9,21.57 137.3,21.57 149.7,21.57 162.1,21.57 174.5,21.57 199.3,21.57 224.1,21.57 248.9,21.57 273.7,21.57"/>
<g fill="#972c7f"><circle cx="52.98" cy="21.88" r="1.65"/><circle cx="55.46" cy="23.88" r="1.65"/><circle cx="57.94" cy="26.66" r="1.65"/><circle cx="60.42" cy="31.59" r="1.65"/><circle cx="62.9" cy="35.45" r="1.65"/><circle cx="65.38" cy="39.61" r="1.65"/><circle cx="67.86" cy="43.62" r="1.65"/><circle cx="70.34" cy="47.63" r="1.65"/><circle cx="72.82" cy="51.64" r="1.65"/><circle cx="75.3" cy="55.65" r="1.65"/><circle cx="77.78" cy="59.66" r="1.65"/><circle cx="80.26" cy="64.29" r="1.65"/><circle cx="82.74" cy="69.38" r="1.65"/><circle cx="85.22" cy="77.4" r="1.65"/><circle cx="87.33" cy="90.4" r="1.65"/><circle cx="87.58" cy="111.3" r="1.65"/><circle cx="88.12" cy="113" r="1.65"/><circle cx="88.44" cy="114.5" r="1.65"/><circle cx="88.52" cy="21.57" r="1.65"/><circle cx="88.59" cy="21.57" r="1.65"/><circle cx="88.82" cy="21.57" r="1.65"/><circle cx="91.47" cy="21.57" r="1.65"/><circle cx="92.81" cy="21.57" r="1.65"/><circle cx="93.35" cy="21.57" r="1.65"/><circle cx="93.9" cy="21.57" r="1.65"/><circle cx="96.48" cy="21.57" r="1.65"/><circle cx="98.66" cy="21.57" r="1.65"/><circle cx="100.1" cy="21.57" r="1.65"/><circle cx="112.5" cy="21.57" r="1.65"/><circle cx="124.9" cy="21.57" r="1.65"/><circle cx="137.3" cy="21.57" r="1.65"/><circle cx="149.7" cy="21.57" r="1.65"/><circle cx="162.1" cy="21.57" r="1.65"/><circle cx="174.5" cy="21.57" r="1.65"/><circle cx="199.3" cy="21.57" r="1.65"/><circle cx="224.1" cy="21.57" r="1.65"/><circle cx="248.9" cy="21.57" r="1.65"/><circle cx="273.7" cy="21.57" r="1.65"/></g>
<line x1="51" y1="21.5" x2="313" y2="21.5" stroke="#000" stroke-width="1" stroke-dasharray="5.6 4.4" stroke-dashoffset="5.15"/>
<g fill="#000" shape-rendering="crispEdges">
<rect x="49" y="16" width="2" height="104"/><rect x="49" y="118" width="265" height="2"/>
<rect x="46" y="21" width="3" height="1"/>
<rect x="46" y="55" width="3" height="1"/>
<rect x="46" y="88" width="3" height="1"/>
<rect x="50" y="120" width="1" height="4"/><rect x="174" y="120" width="1" height="4"/>
</g>
<path d="M51.2 19.3 l4.8 4.8 m0 -4.8 l-4.8 4.8" stroke="#000" stroke-width="1.5" fill="none"/>
<g font-size="9.8" fill="#000" text-anchor="end" stroke="#000" stroke-width=".15" text-rendering="geometricPrecision">
<text x="44.3" y="24.85" textLength="5.23" lengthAdjust="spacingAndGlyphs">0</text>
<text x="44.3" y="58.85" textLength="18.81" lengthAdjust="spacingAndGlyphs">-100</text>
<text x="44.3" y="91.85" textLength="18.81" lengthAdjust="spacingAndGlyphs">-200</text>
</g><g font-size="9.8" fill="#000" text-anchor="middle" stroke="#000" stroke-width=".15" text-rendering="geometricPrecision">
<text x="50.6" y="134.6" textLength="5.23" lengthAdjust="spacingAndGlyphs">0</text><text x="175" y="134.6" textLength="18.3" lengthAdjust="spacingAndGlyphs">0.05</text><text x="298.6" y="134.6" textLength="13.07" lengthAdjust="spacingAndGlyphs">0.1</text></g>
<path d="M298.5 120.3 L301.9 125.5 L295.1 125.5 Z" fill="#ffcc00" stroke="#000" stroke-width=".85" stroke-linejoin="miter"/>
<text x="181.6" y="148.7" font-size="9.7" font-weight="bold" text-anchor="middle" textLength="34.9" lengthAdjust="spacingAndGlyphs" text-rendering="geometricPrecision">TIME (s)</text>
<text x="164.5" y="14.1" font-size="12.4" font-weight="bold" text-anchor="middle" textLength="24.79" lengthAdjust="spacingAndGlyphs">ACC</text>
</g>
</svg>
</body>
</html>
